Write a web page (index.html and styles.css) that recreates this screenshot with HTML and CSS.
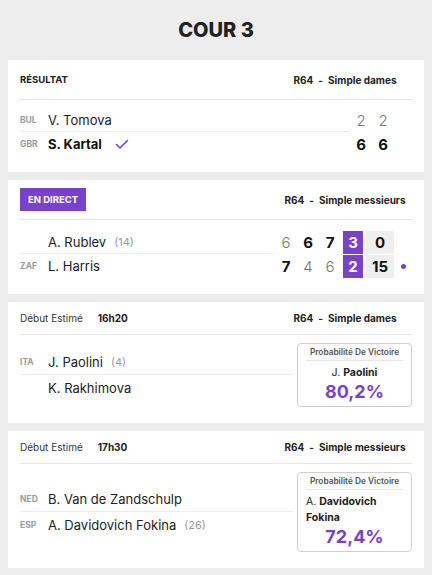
FILE: index.html
```html
<!DOCTYPE html>
<html lang="fr">
<head>
<meta charset="utf-8">
<link rel="stylesheet" href="styles.css">
</head>
<body>
<h1 class="court">COUR 3</h1>

<section class="card">
  <div class="head tall">
    <span class="label">RÉSULTAT</span>
    <span class="round">R64<span class="dash">-</span>Simple dames</span>
  </div>
  <div class="body result">
    <div class="row">
      <div class="player sep"><span class="cc">BUL</span><span class="name">V. Tomova</span></div>
      <div class="scores"><span class="s lt">2</span><span class="s lt">2</span><span class="ind"></span></div>
    </div>
    <div class="row">
      <div class="player"><span class="cc">GBR</span><span class="name b">S. Kartal</span>
        <svg class="check" width="14" height="11" viewBox="0 0 14 11"><path d="M1.5 5.5 L5 9 L12.5 1.5" fill="none" stroke="#7a42cc" stroke-width="1.6" stroke-linecap="round" stroke-linejoin="round"/></svg>
      </div>
      <div class="scores"><span class="s b">6</span><span class="s b">6</span><span class="ind"></span></div>
    </div>
  </div>
</section>

<section class="card">
  <div class="head tall">
    <span class="badge">EN DIRECT</span>
    <span class="round">R64<span class="dash">-</span>Simple messieurs</span>
  </div>
  <div class="body live">
    <div class="row">
      <div class="player sep"><span class="cc"></span><span class="name">A. Rublev</span><span class="seed">(14)</span></div>
      <div class="scores"><span class="s lt">6</span><span class="s b">6</span><span class="s b">7</span><span class="box game">3</span><span class="box pts">0</span><span class="ind"></span></div>
    </div>
    <div class="row">
      <div class="player"><span class="cc">ZAF</span><span class="name">L. Harris</span></div>
      <div class="scores"><span class="s b">7</span><span class="s lt">4</span><span class="s lt">6</span><span class="box game">2</span><span class="box pts">15</span><span class="ind"><i class="dot"></i></span></div>
    </div>
  </div>
</section>

<section class="card">
  <div class="head">
    <span class="start">Début Estimé<b>16h20</b></span>
    <span class="round">R64<span class="dash">-</span>Simple dames</span>
  </div>
  <div class="body sched">
    <div class="players">
      <div class="player sep"><span class="cc">ITA</span><span class="name">J. Paolini</span><span class="seed">(4)</span></div>
      <div class="player"><span class="cc"></span><span class="name">K. Rakhimova</span></div>
    </div>
    <div class="prob">
      <div class="prob-title">Probabilité De Victoire</div>
      <div class="prob-name center">J. <b>Paolini</b></div>
      <div class="prob-val">80,2%</div>
    </div>
  </div>
</section>

<section class="card">
  <div class="head">
    <span class="start">Début Estimé<b>17h30</b></span>
    <span class="round">R64<span class="dash">-</span>Simple messieurs</span>
  </div>
  <div class="body sched">
    <div class="players">
      <div class="player sep"><span class="cc">NED</span><span class="name">B. Van de Zandschulp</span></div>
      <div class="player"><span class="cc">ESP</span><span class="name">A. Davidovich Fokina</span><span class="seed">(26)</span></div>
    </div>
    <div class="prob">
      <div class="prob-title">Probabilité De Victoire</div>
      <div class="prob-name">A. <b>Davidovich</b></div>
      <div class="prob-name tight"><b>Fokina</b></div>
      <div class="prob-val">72,4%</div>
    </div>
  </div>
</section>
</body>
</html>
```

FILE: styles.css
```css
* { box-sizing: border-box; }
body {
  margin: 0;
  background: #ededed;
  font-family: Inter, "Noto Sans", sans-serif;
  color: #1e1e1e;
}
.court {
  margin: 0;
  height: 60px;
  display: flex;
  align-items: center;
  justify-content: center;
  font-size: 20px;
  font-weight: 800;
  color: #222;
}
.card {
  background: #fff;
  margin: 0 8px 8px;
  padding: 0 12px 16px;
}
.head {
  height: 33px;
  display: flex;
  align-items: center;
  justify-content: space-between;
  border-bottom: 1px solid #e6e6e6;
}
.head.tall { height: 40px; }
.label { font-size: 9.5px; font-weight: 700; color: #222; }
.round {
  width: 134px;
  text-align: center;
  font-size: 10px;
  font-weight: 700;
  color: #222;
}
.dash { margin: 0 5px; }
.badge {
  background: #7a42cc;
  color: #fff;
  font-size: 9.5px;
  font-weight: 700;
  height: 23px;
  padding: 0 8px;
  display: flex;
  align-items: center;
}
.start { font-size: 10px; color: #333; }
.start b { margin-left: 15px; font-weight: 700; color: #222; }

.body.result { padding-top: 8px; }
.body.live { padding-top: 10px; }
.row { display: flex; align-items: stretch; height: 24px; }
.player {
  flex: 1;
  display: flex;
  align-items: center;
  min-width: 0;
}
.player.sep { border-bottom: 1px solid #ececec; }
.cc {
  width: 28px;
  font-size: 8.5px;
  font-weight: 700;
  color: #9a9a9a;
}
.name { font-size: 13px; color: #222; }
.name.b { font-weight: 700; color: #111; }
.seed { font-size: 11px; color: #999; margin-left: 8px; }
.check { margin-left: 13px; }
.scores { display: flex; align-items: center; padding-left: 1px; }
.s {
  width: 22px;
  text-align: center;
  font-size: 15px;
}
.s.lt { font-weight: 300; color: #777; }
.s.b { font-weight: 700; color: #111; }
.box {
  height: 23px;
  display: flex;
  align-items: center;
  justify-content: center;
  font-size: 15px;
  font-weight: 700;
}
.box.game { width: 20px; background: #7a42cc; color: #fff; margin-left: 2px; }
.box.pts { width: 28px; background: #efefef; color: #111; margin-left: 3px; }
.ind { width: 18px; display: flex; justify-content: center; align-items: center; }
.dot { width: 5px; height: 5px; border-radius: 50%; background: #7a42cc; display: block; }

.body.sched {
  display: flex;
  align-items: center;
  gap: 4px;
  padding-top: 8px;
}
.players { flex: 1; display: flex; flex-direction: column; }
.players .player { flex: none; height: 26px; }
.prob {
  width: 115px;
  border: 1px solid #cfcfcf;
  border-radius: 4px;
  padding: 0 8px 3px;
}
.prob-title {
  font-size: 8.3px;
  font-weight: 600;
  color: #555;
  text-align: center;
  height: 17px;
  line-height: 17px;
  border-bottom: 1px solid #e6e6e6;
}
.prob-name {
  font-size: 10.5px;
  color: #222;
  line-height: 16px;
  margin-top: 4px;
}
.prob-name.tight { margin-top: 0; }
.prob-name.center { text-align: center; }
.prob-name b { font-weight: 700; }
.prob-val {
  text-align: center;
  font-size: 18px;
  font-weight: 700;
  color: #7a42cc;
  line-height: 22px;
}
```
